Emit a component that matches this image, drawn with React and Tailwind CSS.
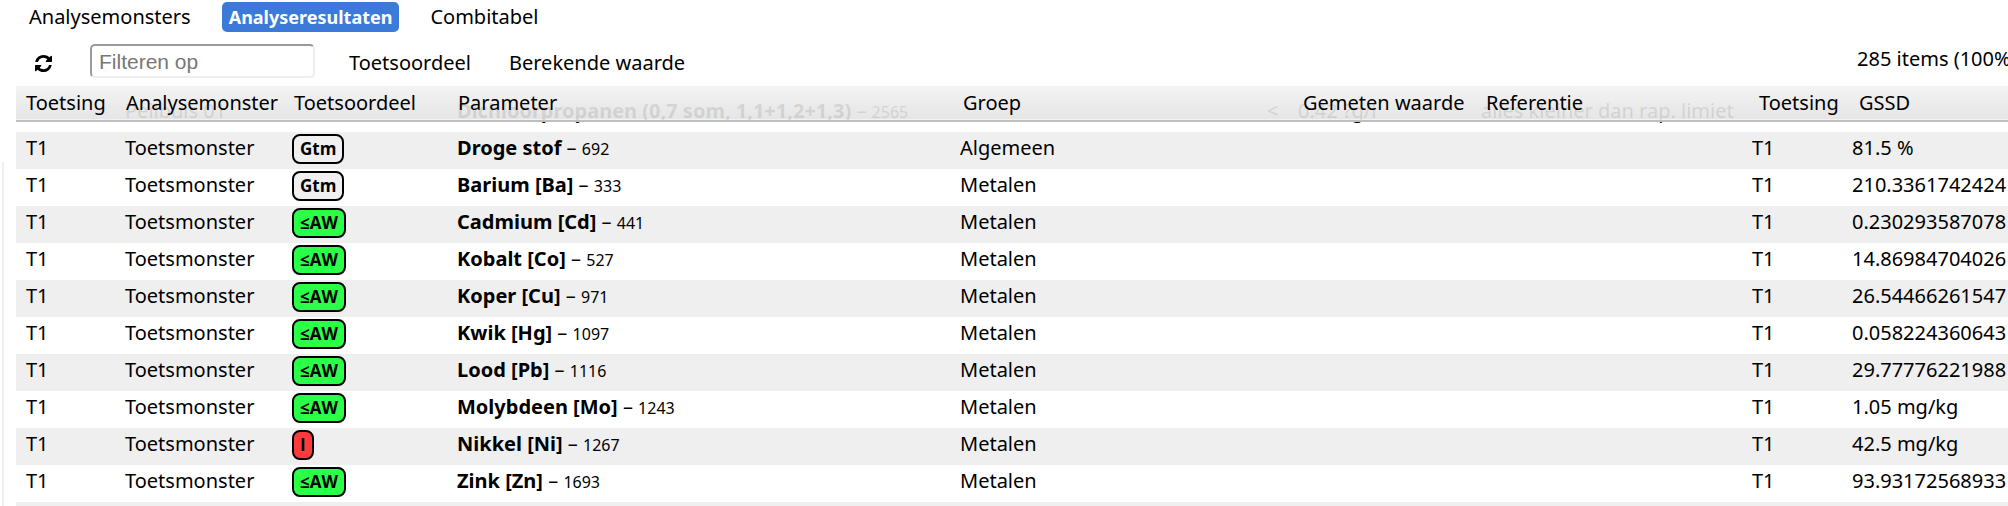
import { useState } from "react";
import clsx from "clsx";

const tabs = ["Analysemonsters", "Analyseresultaten", "Combitabel"];

const rows = [
  { id: 692, name: "Droge stof", group: "Algemeen", verdict: "Gtm", gssd: "81.5 %" },
  { id: 333, name: "Barium [Ba]", group: "Metalen", verdict: "Gtm", gssd: "210.3361742424" },
  { id: 441, name: "Cadmium [Cd]", group: "Metalen", verdict: "≤AW", gssd: "0.230293587078" },
  { id: 527, name: "Kobalt [Co]", group: "Metalen", verdict: "≤AW", gssd: "14.86984704026" },
  { id: 971, name: "Koper [Cu]", group: "Metalen", verdict: "≤AW", gssd: "26.54466261547" },
  { id: 1097, name: "Kwik [Hg]", group: "Metalen", verdict: "≤AW", gssd: "0.058224360643" },
  { id: 1116, name: "Lood [Pb]", group: "Metalen", verdict: "≤AW", gssd: "29.77776221988" },
  { id: 1243, name: "Molybdeen [Mo]", group: "Metalen", verdict: "≤AW", gssd: "1.05 mg/kg" },
  { id: 1267, name: "Nikkel [Ni]", group: "Metalen", verdict: "I", gssd: "42.5 mg/kg" },
  { id: 1693, name: "Zink [Zn]", group: "Metalen", verdict: "≤AW", gssd: "93.93172568933" },
];

const badgeColors = {
  Gtm: "bg-[#f0f0f0]",
  "≤AW": "bg-[#2bff47]",
  I: "bg-[#ff3a3d]",
};

function RefreshIcon() {
  return (
    <svg viewBox="0 0 1536 1536" className="size-[17px]" fill="currentColor" aria-hidden="true">
      <path d="M1511 928q0 5-1 7-64 268-268 434.500t-478 166.500q-146 0-282.500-55t-243.500-157l-129 129q-19 19-45 19t-45-19-19-45v-448q0-26 19-45t45-19h448q26 0 45 19t19 45-19 45l-137 137q71 66 161 102t187 36q134 0 250-65t186-179q11-17 53-117 8-23 30-23h192q13 0 22.500 9.500t9.500 22.500zm25-800v448q0 26-19 45t-45 19h-448q-26 0-45-19t-19-45 19-45l138-138q-148-137-349-137-134 0-250 65t-186 179q-11 17-53 117-8 23-30 23h-199q-13 0-22.500-9.500t-9.500-22.500v-7q65-268 270-434.500t480-166.500q146 0 284 55.500t245 156.500l130-129q19-19 45-19t45 19 19 45z" />
    </svg>
  );
}

function Badge({ verdict }) {
  return (
    <span
      className={clsx(
        "inline-block h-[30px] rounded-lg border-2 border-black px-[6px] font-['Open_Sans',sans-serif] text-[17px] leading-[26px] font-bold",
        badgeColors[verdict]
      )}
    >
      {verdict}
    </span>
  );
}

export default function App() {
  const [tab, setTab] = useState("Analyseresultaten");
  const [filter, setFilter] = useState("");

  const shown = rows.filter((row) => row.name.toLowerCase().includes(filter.toLowerCase()));

  return (
    <div className="flex h-screen flex-col overflow-hidden bg-white font-['Noto_Sans',sans-serif] text-xl leading-[30px] whitespace-nowrap text-black">
      {/* Tabs */}
      <nav className="flex gap-6 pt-[2px] pl-[22px]">
        {tabs.map((name) => (
          <button
            key={name}
            className={clsx(
              "h-[30px] rounded-[5px] px-[7px]",
              tab === name && "bg-[#3b7ad9] text-lg leading-[30px] font-bold text-white"
            )}
            onClick={() => setTab(name)}
          >
            {name}
          </button>
        ))}
      </nav>

      {/* Toolbar */}
      <div className="flex h-[54px] items-center pt-[4px]">
        <button className="ml-[35px] pt-[4px]" aria-label="Vernieuwen">
          <RefreshIcon />
        </button>
        <input
          type="text"
          aria-label="Filteren op"
          placeholder="Filteren op"
          value={filter}
          onChange={(e) => setFilter(e.target.value)}
          className="ml-[38px] h-[34px] w-[225px] rounded-[5px] border-2 border-t-[#9a9a9a] border-r-[#eeeeee] border-b-[#eeeeee] border-l-[#9a9a9a] px-[7px] pt-[2px] font-['Liberation_Sans',sans-serif] text-[21px] outline-none placeholder:text-[#777777]"
        />
        <button className="ml-[34px] pt-[4px]">Toetsoordeel</button>
        <button className="ml-[38px] pt-[4px]">Berekende waarde</button>
        <span className="ml-auto w-[151px] pb-[4px]">285 items (100%)</span>
      </div>

      <div className="flex min-h-0 flex-1">
        <div className="w-4 shrink-0 pt-[76px] pl-[2px]">
          <div className="h-full w-[2px] bg-[#efefef]"></div>
        </div>

        <div className="flex min-w-0 flex-1 flex-col">
          <table className="relative z-10 w-full table-fixed text-left">
            <colgroup>
              <col className="w-[100px]" />
              <col className="w-[168px]" />
              <col className="w-[164px]" />
              <col className="w-[505px]" />
              <col className="w-[340px]" />
              <col className="w-[183px]" />
              <col className="w-[273px]" />
              <col className="w-[100px]" />
              <col />
            </colgroup>
            <thead>
              <tr className="h-[35px] border-b-2 border-[#bfbfbf] bg-linear-to-b from-[#f2f2f2]/91 to-[#e3e3e3]/91 *:px-[10px] *:pt-[2px] *:align-top *:font-normal">
                <th>Toetsing</th>
                <th>Analysemonster</th>
                <th>Toetsoordeel</th>
                <th>Parameter</th>
                <th>Groep</th>
                <th>Gemeten waarde</th>
                <th>Referentie</th>
                <th>Toetsing</th>
                <th>GSSD</th>
              </tr>
            </thead>
          </table>

          <div className="-mt-[36px] min-h-0 flex-1 overflow-hidden pt-[9px]">
            <table className="w-full table-fixed">
              <colgroup>
                <col className="w-[99px]" />
                <col className="w-[167px]" />
                <col className="w-[165px]" />
                <col className="w-[503px]" />
                <col className="w-[307px]" />
                <col className="w-[31px]" />
                <col className="w-[183px]" />
                <col className="w-[271px]" />
                <col className="w-[100px]" />
                <col />
              </colgroup>
              <tbody className="*:h-[37px] *:even:bg-[#efefef] [&_td]:px-[10px] [&_td]:pt-px [&_td]:align-top">
                <tr>
                  <td></td>
                  <td>Peilbuis 01</td>
                  <td></td>
                  <td>
                    <b>Dichloorpropanen (0,7 som, 1,1+1,2+1,3)</b> – <span className="text-base">2565</span>
                  </td>
                  <td></td>
                  <td>&lt;</td>
                  <td>0.42 ?g/l</td>
                  <td>alles kleiner dan rap. limiet</td>
                  <td></td>
                  <td></td>
                </tr>
                {shown.map((row) => (
                  <tr key={row.id}>
                    <td>T1</td>
                    <td>Toetsmonster</td>
                    <td>
                      <Badge verdict={row.verdict} />
                    </td>
                    <td>
                      <b>{row.name}</b> – <span className="text-base">{row.id}</span>
                    </td>
                    <td>{row.group}</td>
                    <td></td>
                    <td></td>
                    <td></td>
                    <td>T1</td>
                    <td>{row.gssd}</td>
                  </tr>
                ))}
                <tr>
                  <td colSpan={10}></td>
                </tr>
              </tbody>
            </table>
          </div>
        </div>
      </div>
    </div>
  );
}
